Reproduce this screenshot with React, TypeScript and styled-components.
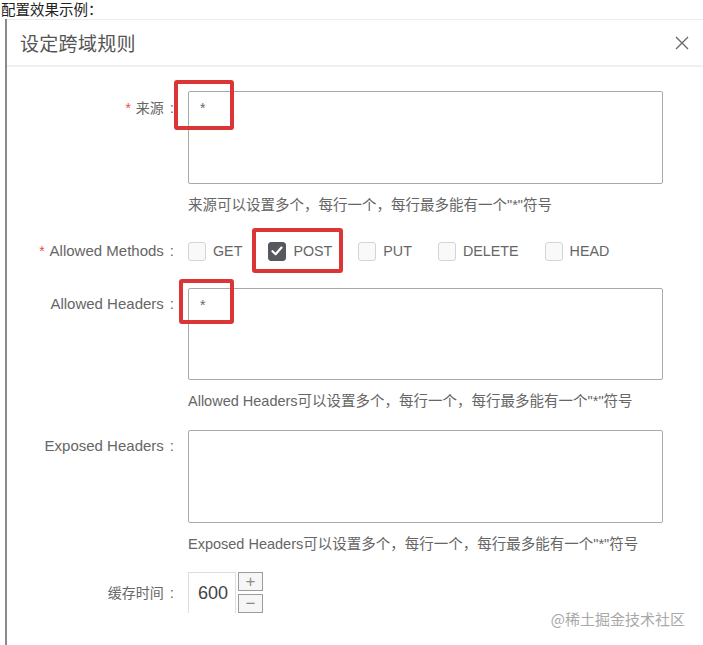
import React from 'react'
import styled, {createGlobalStyle} from 'styled-components'

const GlobalStyle = createGlobalStyle`
  html, body {
    margin: 0;
    padding: 0;
    background: #fff;
    overflow: hidden;
  }
  body {
    font-family: "Liberation Sans", "Noto Sans CJK SC", sans-serif;
  }
`

const Page = styled.div`
  position: relative;
  width: 703px;
  height: 645px;
  overflow: hidden;
`

const Caption = styled.div`
  height: 19px;
  padding-left: 1px;
  font-size: 14.5px;
  line-height: 18px;
  color: #222;
  font-family: "Noto Sans CJK SC", sans-serif;
`

const Frame = styled.div`
  margin-left: 5px;
  border-left: 2px solid #8a8a8a;
  height: 626px;
`

const Dialog = styled.div`
  width: 720px;
  border-top: 1px solid #ececec;
  background: #fff;
`

const Header = styled.div`
  display: flex;
  align-items: center;
  justify-content: space-between;
  height: 45px;
  padding: 0 13px 0 13px;
  border-bottom: 2px solid #f0f0f0;
`

const Title = styled.div`
  font-family: "Noto Sans CJK SC", sans-serif;
  font-size: 19px;
  color: #555;
  letter-spacing: 0.3px;
`

const CloseButton = styled.button`
  display: flex;
  align-items: center;
  justify-content: center;
  width: 20px;
  height: 20px;
  padding: 0;
  margin-right: 22px;
  border: none;
  background: none;
  color: #666;
`

const Body = styled.div`
  padding-top: 24px;
`

const Row = styled.div<{$top: number; $align?: string}>`
  display: flex;
  align-items: ${({$align}) => $align || 'flex-start'};
  margin-top: ${({$top}) => $top}px;
`

const Label = styled.div<{$pad?: number}>`
  width: 169px;
  margin-right: 12px;
  padding-top: ${({$pad}) => $pad || 0}px;
  text-align: right;
  font-size: 15px;
  line-height: 20px;
  color: #666;
  white-space: nowrap;
`

const Cjk = styled.span`
  font-family: "Noto Sans CJK SC", sans-serif;
  font-size: 14px;
`

const Colon = styled.span`
  margin-left: 6px;
  margin-right: 2px;
  font-size: 15px;
`

const Star = styled.span`
  color: #e5503c;
  font-size: 14px;
  margin-right: 5px;
`

const Control = styled.div`
  display: flex;
  flex-direction: column;
`

const AreaWrap = styled.div`
  position: relative;
`

const TextArea = styled.textarea<{$h: number}>`
  display: block;
  box-sizing: border-box;
  width: 475px;
  height: ${({$h}) => $h}px;
  margin: 0;
  padding: 6px 11px;
  border: 1px solid #a9a9a9;
  border-radius: 2px;
  resize: none;
  font-family: "Liberation Sans", sans-serif;
  font-size: 14px;
  line-height: 20px;
  color: #666;
  background: #fff;
  outline: none;
`

const Hint = styled.div`
  margin-top: 12px;
  font-family: "Liberation Sans", "Noto Sans CJK SC", sans-serif;
  font-size: 14.5px;
  line-height: 18px;
  color: #666;
  white-space: nowrap;
`

const Mark = styled.div<{$l: number; $t: number; $w: number; $h: number}>`
  position: absolute;
  left: ${({$l}) => $l}px;
  top: ${({$t}) => $t}px;
  width: ${({$w}) => $w}px;
  height: ${({$h}) => $h}px;
  box-sizing: border-box;
  border: 4px solid #dc3535;
  border-radius: 3px;
  pointer-events: none;
`

const Methods = styled.div`
  display: flex;
  align-items: center;
  height: 20px;
`

const Method = styled.label`
  position: relative;
  display: flex;
  align-items: center;
  margin-right: 26px;
  font-size: 14.3px;
  color: #666;
`

const Box = styled.span<{$checked?: boolean}>`
  display: flex;
  align-items: center;
  justify-content: center;
  box-sizing: border-box;
  width: 18px;
  height: 19px;
  margin-right: 7px;
  border: 1px solid ${({$checked}) => ($checked ? '#55585e' : '#d4d4d4')};
  border-radius: 3px;
  background: ${({$checked}) => ($checked ? '#55585e' : '#f9f9f9')};
`

const NumberWrap = styled.div`
  display: flex;
  align-items: flex-start;
  height: 41px;
`

const NumberBox = styled.div`
  box-sizing: border-box;
  width: 48px;
  height: 41px;
  padding-left: 9px;
  border: 1px solid #dedede;
  border-bottom: none;
  font-size: 18px;
  line-height: 40px;
  color: #444;
`

const Steps = styled.div`
  display: flex;
  flex-direction: column;
  gap: 3px;
  margin-left: 2px;
`

const Step = styled.button`
  box-sizing: border-box;
  width: 25px;
  height: 19px;
  padding: 0;
  border: 1px solid #9c9c9c;
  background: #f6f6f6;
  color: #8a8a8a;
  font-family: "Liberation Sans", sans-serif;
  font-size: 17px;
  line-height: 15px;
`

const Watermark = styled.div`
  position: absolute;
  right: 18px;
  top: 608px;
  font-family: "Noto Sans CJK SC", sans-serif;
  font-size: 15px;
  color: #a8a8a8;
`

function Check({checked}: {checked?: boolean}) {
  return (
    <Box $checked={checked}>
      {checked && (
        <svg width="12" height="10" viewBox="0 0 12 10">
          <path d="M1.5 5.2 L4.6 8.2 L10.5 1.6" fill="none" stroke="#fff" strokeWidth="2.2" strokeLinecap="round" strokeLinejoin="round" />
        </svg>
      )}
    </Box>
  )
}

const methods = ['GET', 'POST', 'PUT', 'DELETE', 'HEAD']

export default function App() {
  return (
    <Page>
      <GlobalStyle />
      <Caption>配置效果示例：</Caption>
      <Frame>
        <Dialog>
          <Header>
            <Title>设定跨域规则</Title>
            <CloseButton>
              <svg width="14" height="14" viewBox="0 0 14 14">
                <path d="M1 1 L13 13 M13 1 L1 13" stroke="#666" strokeWidth="1.3" />
              </svg>
            </CloseButton>
          </Header>
          <Body>
            <Row $top={0}>
              <Label $pad={6}>
                <Star>*</Star>
                <Cjk>来源</Cjk>
                <Colon>:</Colon>
              </Label>
              <Control>
                <AreaWrap>
                  <TextArea $h={93} readOnly value="*" />
                  <Mark $l={-14} $t={-11} $w={60} $h={50} />
                </AreaWrap>
                <Hint>来源可以设置多个，每行一个，每行最多能有一个"*"符号</Hint>
              </Control>
            </Row>

            <Row $top={27} $align="center">
              <Label>
                <Star>*</Star>Allowed Methods<Colon>:</Colon>
              </Label>
              <Methods>
                {methods.map((m) => (
                  <Method key={m}>
                    <Check checked={m === 'POST'} />
                    {m}
                    {m === 'POST' && <Mark $l={-16} $t={-14} $w={91} $h={45} />}
                  </Method>
                ))}
              </Methods>
            </Row>

            <Row $top={27}>
              <Label $pad={6}>
                Allowed Headers<Colon>:</Colon>
              </Label>
              <Control>
                <AreaWrap>
                  <TextArea $h={92} readOnly value="*" />
                  <Mark $l={-9} $t={-9} $w={55} $h={45} />
                </AreaWrap>
                <Hint>Allowed Headers可以设置多个，每行一个，每行最多能有一个"*"符号</Hint>
              </Control>
            </Row>

            <Row $top={20}>
              <Label $pad={6}>
                Exposed Headers<Colon>:</Colon>
              </Label>
              <Control>
                <TextArea $h={93} readOnly value="" />
                <Hint>Exposed Headers可以设置多个，每行一个，每行最多能有一个"*"符号</Hint>
              </Control>
            </Row>

            <Row $top={19} $align="center">
              <Label>
                <Cjk>缓存时间</Cjk>
                <Colon>:</Colon>
              </Label>
              <NumberWrap>
                <NumberBox>600</NumberBox>
                <Steps>
                  <Step>+</Step>
                  <Step>−</Step>
                </Steps>
              </NumberWrap>
            </Row>
          </Body>
        </Dialog>
      </Frame>
      <Watermark>@稀土掘金技术社区</Watermark>
    </Page>
  )
}
